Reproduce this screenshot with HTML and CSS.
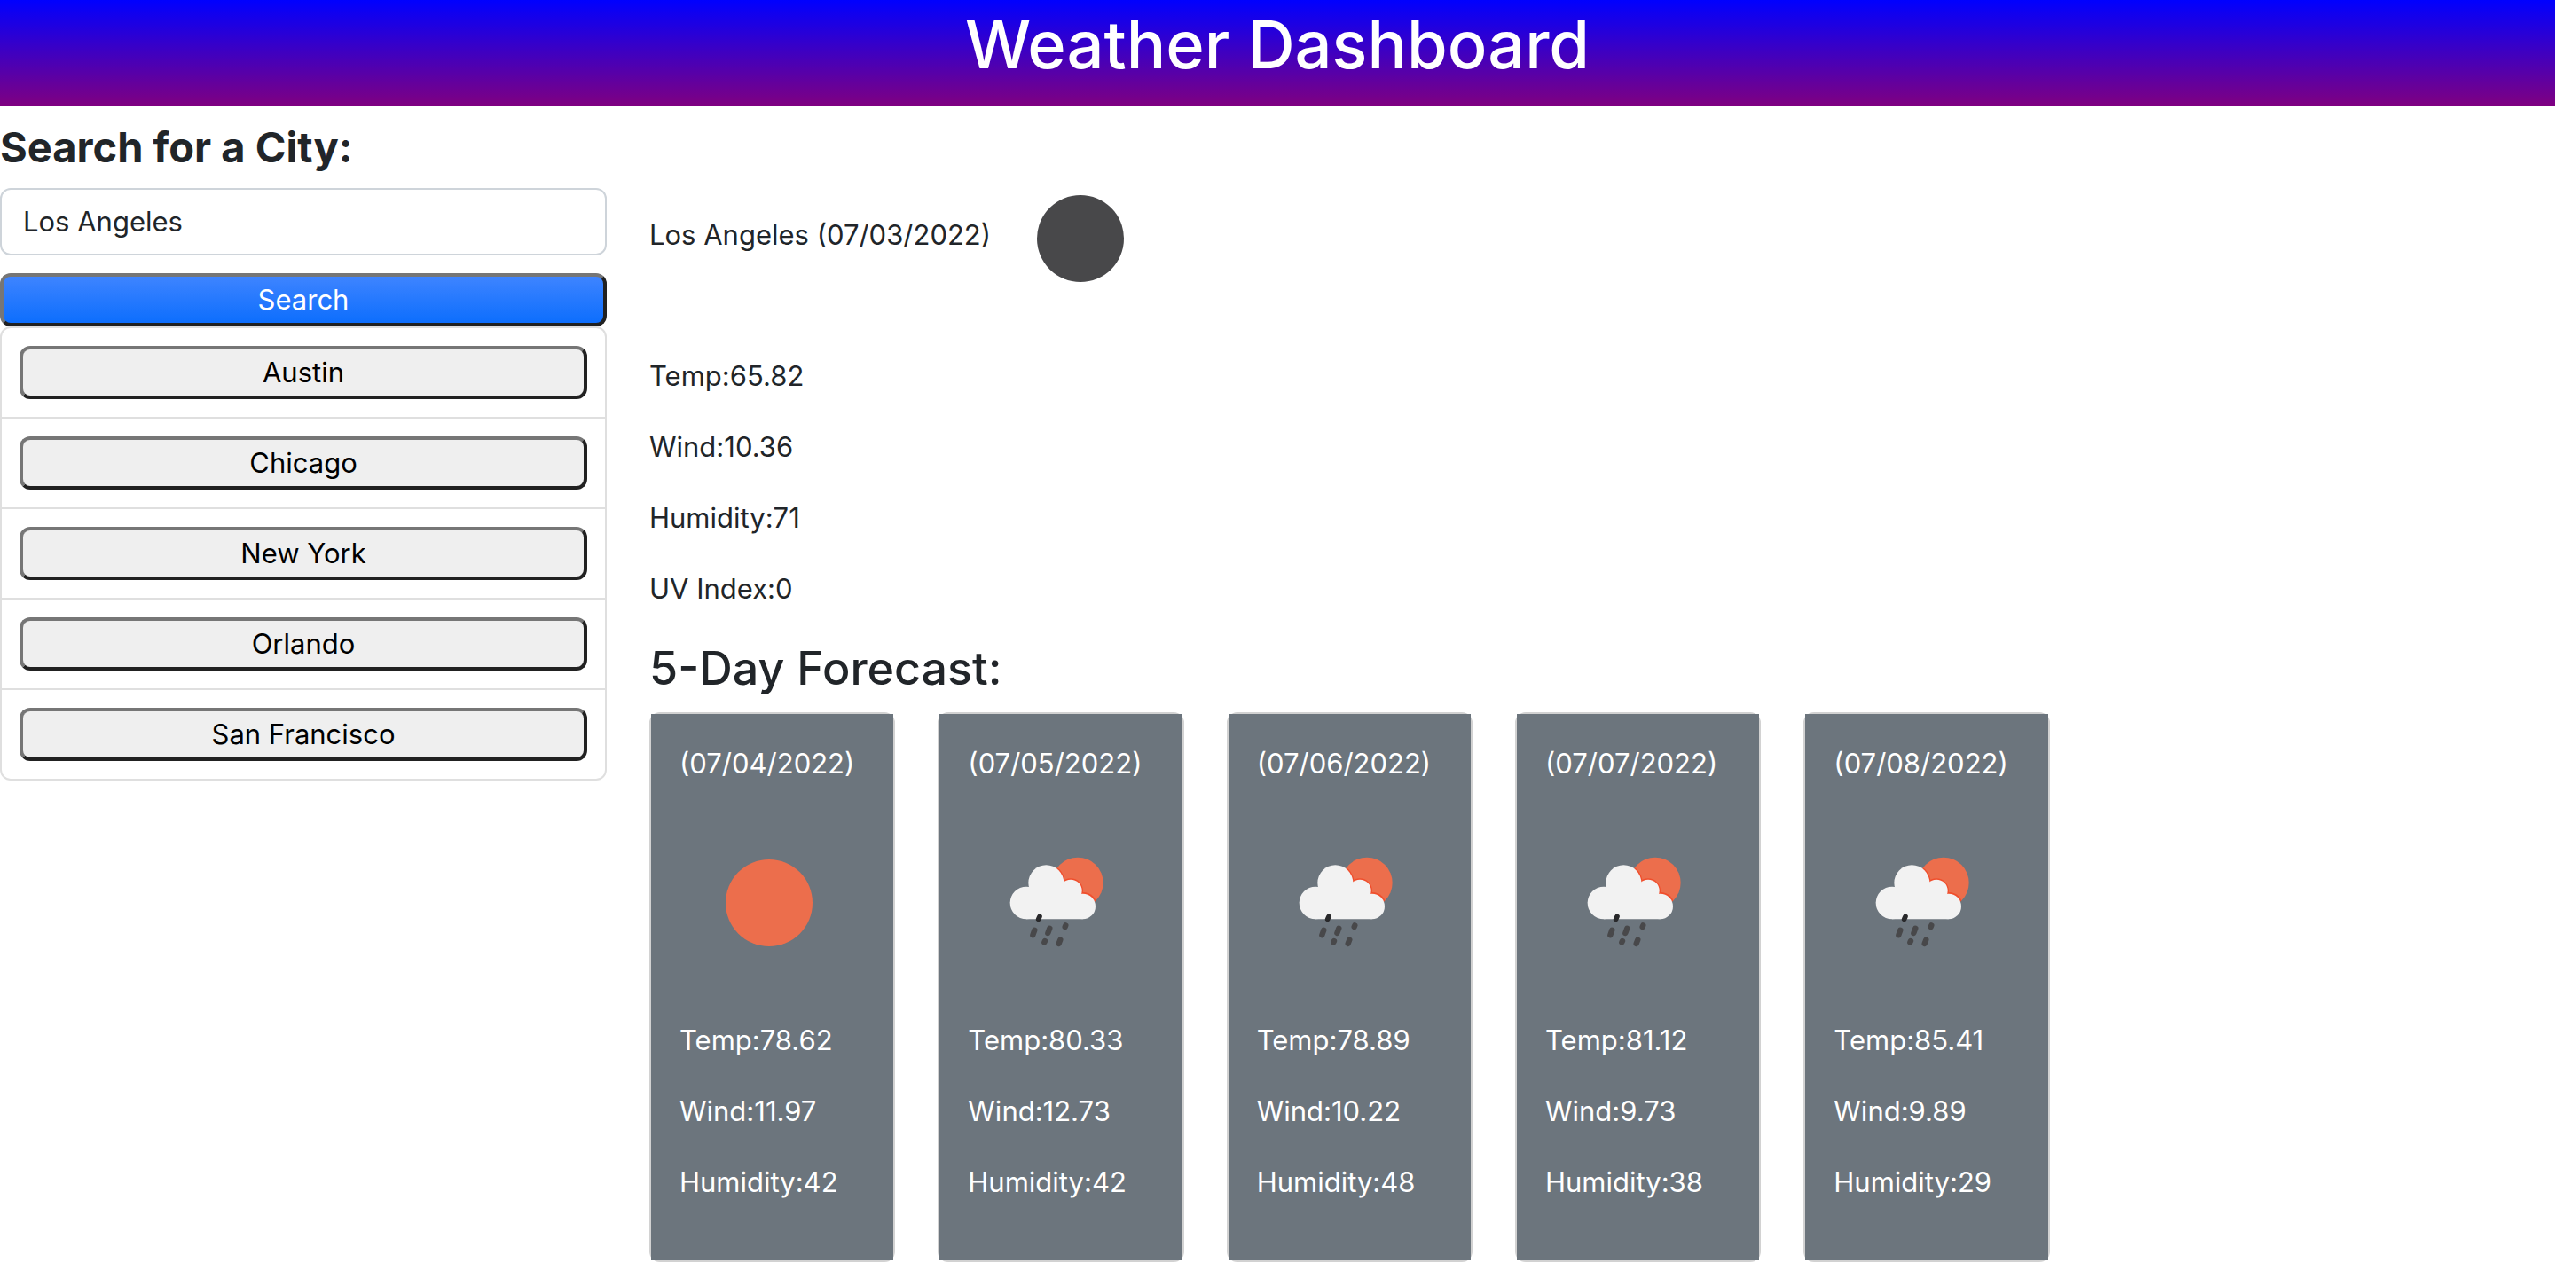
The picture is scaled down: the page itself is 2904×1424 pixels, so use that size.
FILE: index.html
```html
<!DOCTYPE html>
<html lang="en">
<head>
  <meta charset="UTF-8">
  <meta name="viewport" content="width=device-width, initial-scale=1">
  <title>Weather Dashboard</title>
  <link rel="stylesheet" href="styles.css">
</head>
<body>
  <svg class="icon-defs" aria-hidden="true">
    <defs>
      <symbol id="icon-clear" viewBox="0 0 200 200">
        <circle cx="101" cy="101" r="49" fill="currentColor"/>
      </symbol>
      <clipPath id="sun-disc"><circle cx="345" cy="196" r="86"/></clipPath>
      <symbol id="icon-rain" viewBox="0 0 200 200">
        <g transform="translate(9 13) scale(0.3333)">
          <circle cx="345" cy="196" r="86" fill="#ec6e4c"/>
          <g clip-path="url(#sun-disc)" fill="#f04e2c">
            <circle cx="238" cy="196" r="64"/>
            <circle cx="321" cy="223" r="42"/>
            <circle cx="363" cy="275" r="47"/>
          </g>
          <g fill="#f2f2f2">
            <circle cx="171" cy="264" r="55"/>
            <circle cx="238" cy="196" r="60"/>
            <circle cx="321" cy="223" r="38"/>
            <circle cx="362" cy="276" r="43"/>
            <path d="M171 319V240L200 215H335L362 260V319Z"/>
          </g>
          <g stroke="#48484a" stroke-width="19" stroke-linecap="round">
            <path d="M216 310L212 319" stroke="#29292b" stroke-width="17"/>
            <path d="M199 356L193 373M250 350L244 366M304 340L302 345M234 393L232 397M286 389L281 402"/>
          </g>
        </g>
      </symbol>
    </defs>
  </svg>

  <div class="page">
    <header class="banner">
      <h1 class="banner-title">Weather Dashboard</h1>
    </header>

    <div class="layout">
      <aside class="sidebar">
        <form class="search">
          <label class="search-label" for="city">Search for a City:</label>
          <input class="search-input" id="city" type="text" value="Los Angeles">
          <button class="btn btn-primary" type="button">Search</button>
        </form>
        <ul class="history">
          <li class="history-item"><button class="btn" type="button">Austin</button></li>
          <li class="history-item"><button class="btn" type="button">Chicago</button></li>
          <li class="history-item"><button class="btn" type="button">New York</button></li>
          <li class="history-item"><button class="btn" type="button">Orlando</button></li>
          <li class="history-item"><button class="btn" type="button">San Francisco</button></li>
        </ul>
      </aside>

      <main class="weather">
        <section class="current">
          <p>Los Angeles (07/03/2022)<svg class="icon icon-night" role="img" aria-label="Clear night"><use href="#icon-clear"/></svg></p>
          <p>Temp:65.82</p>
          <p>Wind:10.36</p>
          <p>Humidity:71</p>
          <p>UV Index:0</p>
        </section>

        <h2 class="forecast-title">5-Day Forecast:</h2>
        <section class="forecast">
          <article class="card"><div class="card-body">
            <p>(07/04/2022)</p>
            <svg class="icon icon-day" role="img" aria-label="Clear sky"><use href="#icon-clear"/></svg>
            <p>Temp:78.62</p>
            <p>Wind:11.97</p>
            <p>Humidity:42</p>
          </div></article>
          <article class="card"><div class="card-body">
            <p>(07/05/2022)</p>
            <svg class="icon" role="img" aria-label="Rain"><use href="#icon-rain"/></svg>
            <p>Temp:80.33</p>
            <p>Wind:12.73</p>
            <p>Humidity:42</p>
          </div></article>
          <article class="card"><div class="card-body">
            <p>(07/06/2022)</p>
            <svg class="icon" role="img" aria-label="Rain"><use href="#icon-rain"/></svg>
            <p>Temp:78.89</p>
            <p>Wind:10.22</p>
            <p>Humidity:48</p>
          </div></article>
          <article class="card"><div class="card-body">
            <p>(07/07/2022)</p>
            <svg class="icon" role="img" aria-label="Rain"><use href="#icon-rain"/></svg>
            <p>Temp:81.12</p>
            <p>Wind:9.73</p>
            <p>Humidity:38</p>
          </div></article>
          <article class="card"><div class="card-body">
            <p>(07/08/2022)</p>
            <svg class="icon" role="img" aria-label="Rain"><use href="#icon-rain"/></svg>
            <p>Temp:85.41</p>
            <p>Wind:9.89</p>
            <p>Humidity:29</p>
          </div></article>
        </section>
      </main>
    </div>
  </div>
</body>
</html>
```
FILE: styles.css
```css
*,
*::before,
*::after {
  box-sizing: border-box;
}

body {
  margin: 0;
  background: #fff;
  color: #212529;
  font-family: Inter, "Liberation Sans", sans-serif;
  font-size: 31px;
  line-height: 48px;
}

p {
  margin: 0 0 32px;
}

.icon-defs {
  position: absolute;
  width: 0;
  height: 0;
}

.page {
  padding-right: 24px;
}

.banner {
  height: 120px;
  background: linear-gradient(blue, purple);
  color: #fff;
  text-align: center;
}

.banner-title {
  margin: 0;
  font-size: 74px;
  font-weight: 500;
  line-height: 100px;
}

.layout {
  display: grid;
  grid-template-columns: repeat(12, minmax(0, 1fr));
  column-gap: 48px;
  align-items: start;
}

.sidebar {
  grid-column: span 3;
}

.search {
  display: flex;
  flex-direction: column;
}

.search-label {
  margin: 16px 0;
  font-size: 47px;
  font-weight: 700;
  line-height: 60px;
}

.search-input {
  width: 100%;
  margin-bottom: 20px;
  padding: 12px 24px;
  border: 2px solid #ced4da;
  border-radius: 12px;
  background: #fff;
  color: inherit;
  font: inherit;
}

.btn {
  display: block;
  width: 100%;
  padding: 2px 12px;
  border: 4px solid;
  border-color: #767676 #212121 #212121 #767676;
  border-radius: 12px;
  background: #efefef;
  color: #000;
  font: inherit;
}

.btn-primary {
  background: linear-gradient(#3e84ff, #0d6efd);
  color: #fff;
}

.history {
  margin: 0;
  padding: 0;
  border: 2px solid #dfdfdf;
  border-radius: 12px;
  list-style: none;
}

.history-item {
  padding: 20px;
}

.history-item + .history-item {
  border-top: 2px solid #dfdfdf;
}

.weather {
  grid-column: span 8;
  padding-top: 48px;
}

.icon {
  width: 200px;
  height: 200px;
  vertical-align: middle;
}

.icon-night {
  color: #48484a;
}

.icon-day {
  color: #ec6e4c;
}

.forecast-title {
  margin: 0 0 15px;
  font-size: 52px;
  font-weight: 500;
  line-height: 68px;
}

.forecast {
  display: grid;
  grid-template-columns: repeat(6, minmax(0, 1fr));
  column-gap: 48px;
}

.card {
  border: 2px solid #d2d2d2;
  border-radius: 12px;
}

.card-body {
  padding: 32px;
  background: #6c757d;
  color: #fff;
}

.card-body .icon {
  display: block;
  margin-bottom: 32px;
}
```
